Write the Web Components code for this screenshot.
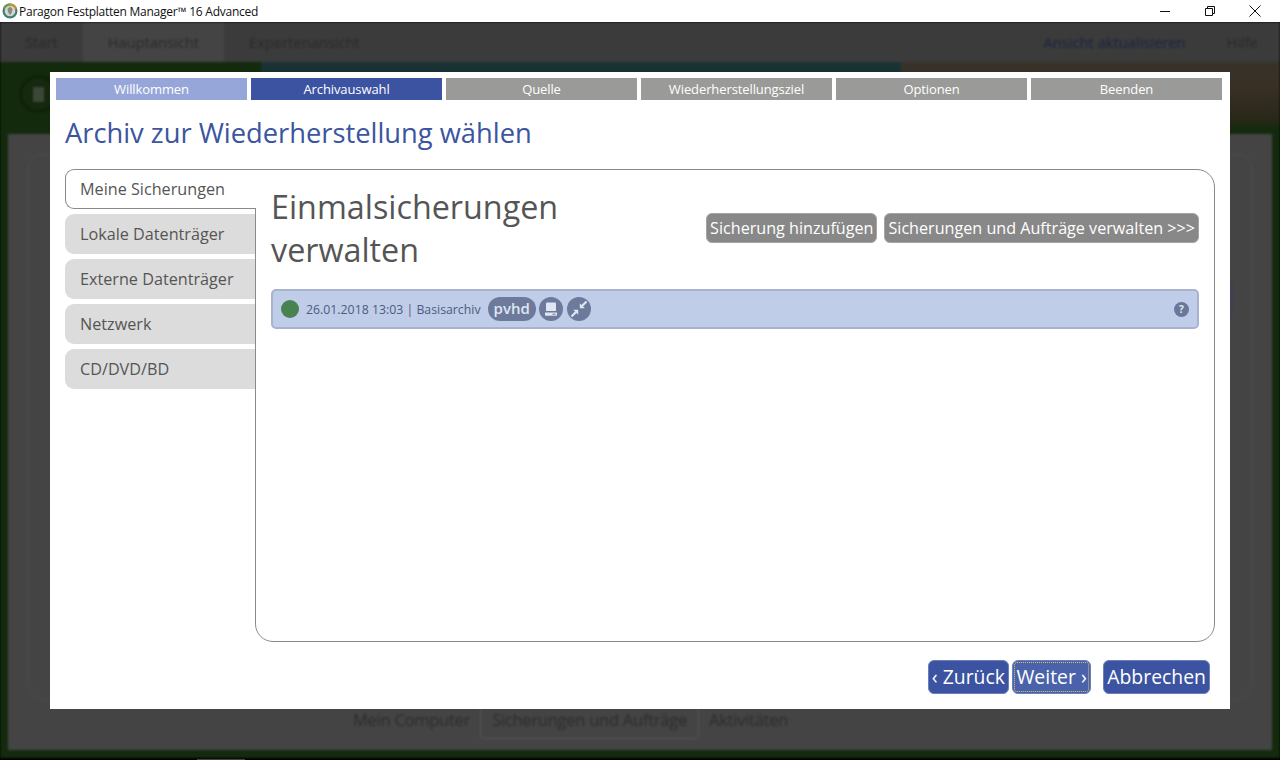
<!DOCTYPE html>
<html lang="de">
<head>
<meta charset="utf-8">
<title>Paragon Festplatten Manager</title>
<style>
  html, body { margin: 0; height: 100%; overflow: hidden; background: #fff; }
  body { font-family: "Open Sans", "Liberation Sans", sans-serif; }
</style>
</head>
<body>
<app-window>
  <title-bar>Paragon Festplatten Manager™ 16 Advanced</title-bar>
  <dimmed-app></dimmed-app>
  <wizard-dialog slot="dialog">
    <wizard-step state="done">Willkommen</wizard-step>
    <wizard-step state="active">Archivauswahl</wizard-step>
    <wizard-step>Quelle</wizard-step>
    <wizard-step>Wiederherstellungsziel</wizard-step>
    <wizard-step>Optionen</wizard-step>
    <wizard-step>Beenden</wizard-step>

    <source-tab slot="tabs" selected>Meine Sicherungen</source-tab>
    <source-tab slot="tabs">Lokale Datenträger</source-tab>
    <source-tab slot="tabs">Externe Datenträger</source-tab>
    <source-tab slot="tabs">Netzwerk</source-tab>
    <source-tab slot="tabs">CD/DVD/BD</source-tab>

    <span slot="heading">Einmalsicherungen<br>verwalten</span>
    <gray-button slot="actions">Sicherung hinzufügen</gray-button>
    <gray-button slot="actions">Sicherungen und Aufträge verwalten &gt;&gt;&gt;</gray-button>

    <archive-row slot="list"></archive-row>

    <blue-button slot="nav" style="margin-right:3px">‹ Zurück</blue-button>
    <blue-button slot="nav" focused style="margin-right:12px">Weiter ›</blue-button>
    <blue-button slot="nav">Abbrechen</blue-button>
  </wizard-dialog>
</app-window>

<script>
// small helper so each element only has to hand over its markup
class ShadowElement extends HTMLElement {
  constructor() {
    super();
    this.attachShadow({ mode: 'open' });
  }

  connectedCallback() {
    this.shadowRoot.innerHTML = this.markup();
  }
}

class AppWindow extends ShadowElement {
  markup() {
    return `
    <style>
      :host { display: flex; flex-direction: column; width: 1280px; height: 760px; position: relative; overflow: hidden; }
      .dialog { position: absolute; left: 50px; top: 72px; }
    </style>
    <slot></slot>
    <div class="dialog"><slot name="dialog"></slot></div>`;
  }
}

class TitleBar extends ShadowElement {
  markup() {
    return `
    <style>
      :host { display: flex; align-items: center; height: 22px; flex: none; background: #fff; color: #111; font: 12px "Open Sans", sans-serif; }
      .logo { width: 16px; height: 16px; margin: 0 1px 0 2px; flex: none; }
      .text { flex: 1; letter-spacing: -0.245px; }
      .ctl { width: 45px; height: 22px; flex: none; display: flex; align-items: center; justify-content: center; }
    </style>
    <svg class="logo" viewBox="0 0 16 16">
      <circle cx="8" cy="8" r="7.5" fill="#3d7f78"/>
      <path d="M8 .5A7.5 7.5 0 0 1 15 5.500L8 8z" fill="#c9913f"/>
      <path d="M1 5A7.500 7.500 0 0 1 8 .5L8 8z" fill="#6f9a52"/>
      <circle cx="8" cy="8" r="5.300" fill="#d5d6cf"/>
      <path d="M8 3.500l2.600 2.400-.8 3.300L8 12.500 6.200 9.200l-.8-3.300z" fill="#8a8d84"/>
    </svg>
    <span class="text"><slot></slot></span>
    <span class="ctl"><svg width="12" height="12" viewBox="0 0 12 12"><path d="M1 6.500h10" stroke="#111" fill="none"/></svg></span>
    <span class="ctl"><svg width="12" height="12" viewBox="0 0 12 12"><path d="M1.500 3.500h7v7h-7zM3.500 3.500v-2h7v7h-2" stroke="#111" fill="none"/></svg></span>
    <span class="ctl" style="margin-right:3px"><svg width="12" height="12" viewBox="0 0 12 12"><path d="M.5.5l11 11M11.500.5l-11 11" stroke="#111" fill="none"/></svg></span>`;
  }
}

// the main window behind the modal: dark and blurred
class DimmedApp extends ShadowElement {
  markup() {
    return `
    <style>
      :host { display: flex; flex-direction: column; flex: 1; min-height: 0; background: #000; overflow: hidden; }
      .wrap { flex: 1; display: flex; flex-direction: column; filter: blur(1px); min-height: 0; font: 14.7px "Open Sans", sans-serif; color: #2a2a2a; }
      .menu { height: 40px; flex: none; background: #3b3b3b; display: flex; align-items: center; }
      .menu span { padding: 0 25px; }
      .menu .on { align-self: stretch; display: flex; align-items: center; background: #444; }
      .menu .grow { flex: 1; }
      .menu .blue { color: #1b2140; padding: 0 20px 0 0; }
      .menu .help { padding: 0 22px 0 21px; }
      .band { height: 66px; flex: none; display: flex; }
      .band > div { display: flex; align-items: center; }
      .green { width: 261px; background: #142a0c; }
      .teal { width: 640px; background: linear-gradient(#1a3434, #1b2c32 30%, #1c2a2a 70%, #182a18); }
      .brown { flex: 1; background: linear-gradient(#38322a, #383024 40%, #2a281a 85%, #182a0e); }
      .circle { width: 38px; height: 38px; box-sizing: border-box; border-radius: 50%; margin: -2px 0 0 19px; border: 3px solid #0e2208; background: #15290e; display: flex; align-items: center; justify-content: center; }
      .doc { width: 11px; height: 15px; background: #3c4639; border-radius: 1px; }
      .main { flex: 1; background: #142a0c; padding: 6px 8px 8px; display: flex; min-height: 0; }
      .sheet { flex: 1; background: #444; display: flex; flex-direction: column; padding: 20px 20px 0; }
      .card { height: 546px; box-sizing: border-box; flex: none; border: 1px solid #4d4d4d; border-radius: 14px; padding: 126px 18px 0; display: flex; justify-content: flex-end; align-items: flex-start; }
      .ghost { width: 40px; height: 36px; background: #3d4050; border-radius: 4px; }
      .bottom { display: flex; align-items: flex-start; gap: 10px; font-size: 16.5px; letter-spacing: -0.25px; color: #2c2c2c; padding-left: 325px; }
      .bottom span { margin-top: 8px; }
      .bottom b { font-weight: 400; border: 1px solid #555; border-top: 0; border-radius: 0 0 4px 4px; padding: 8px 11px 7px; }
      .foot { height: 2px; flex: none; background: #000; display: flex; align-items: flex-end; }
      .foot i { display: block; width: 48px; height: 1px; margin-left: 197px; background: #444; }
    </style>
    <div class="wrap">
      <div class="menu">
        <span>Start</span><span class="on">Hauptansicht</span><span>Expertenansicht</span>
        <span class="grow"></span>
        <span class="blue">Ansicht aktualisieren</span><span class="help">Hilfe</span>
      </div>
      <div class="band">
        <div class="green"><div class="circle"><div class="doc"></div></div></div>
        <div class="teal"></div>
        <div class="brown"></div>
      </div>
      <div class="main">
        <div class="sheet">
          <div class="card"><div class="ghost"></div></div>
          <div class="bottom"><span>Mein Computer</span><b>Sicherungen und Aufträge</b><span>Aktivitäten</span></div>
        </div>
      </div>
    </div>
    <div class="foot"><i></i></div>`;
  }
}

class WizardDialog extends ShadowElement {
  markup() {
    return `
    <style>
      :host { display: flex; flex-direction: column; box-sizing: border-box; width: 1180px; height: 637px; background: #fff; padding: 6px 8px 0 6px; color: #555; }
      .steps { display: grid; grid-template-columns: repeat(6, 1fr); gap: 4px; height: 22px; }
      h1 { margin: 16px 0 0 9px; font: 400 27.300px/34px "Open Sans", sans-serif; color: #3b55a0; height: 53px; }
      .body { display: flex; margin-left: 9px; margin-right: 7px; height: 473px; }
      .tabs { width: 190px; flex: none; display: flex; flex-direction: column; gap: 5px; position: relative; z-index: 1; }
      .panel { flex: 1; box-sizing: border-box; border: 1px solid #8a8a8a; border-radius: 0 18px 18px 18px; padding: 0 15px; }
      .head { display: flex; justify-content: space-between; align-items: center; height: 119px; }
      .title { font-size: 32.300px; line-height: 43px; color: #555; padding-bottom: 3px; }
      .actions { display: flex; gap: 7px; margin-bottom: 3px; }
      .nav { display: flex; justify-content: flex-end; margin: 18px 12px 0 0; }
    </style>
    <div class="steps"><slot></slot></div>
    <h1>Archiv zur Wiederherstellung wählen</h1>
    <div class="body">
      <div class="tabs"><slot name="tabs"></slot></div>
      <div class="panel">
        <div class="head">
          <div class="title"><slot name="heading"></slot></div>
          <div class="actions"><slot name="actions"></slot></div>
        </div>
        <slot name="list"></slot>
      </div>
    </div>
    <div class="nav"><slot name="nav"></slot></div>`;
  }
}

class WizardStep extends ShadowElement {
  markup() {
    const colors = { done: '#97a6d8', active: '#3b53a0' };
    const bg = colors[this.getAttribute('state')] || '#9a9a98';
    return `
    <style>
      :host { display: flex; align-items: center; justify-content: center; background: ${bg}; color: #fff; font: 13px "Open Sans", sans-serif; letter-spacing: -0.1px; }
    </style>
    <slot></slot>`;
  }
}

class SourceTab extends ShadowElement {
  markup() {
    return `
    <style>
      :host { display: flex; align-items: center; box-sizing: border-box; height: 40px; padding-left: 15px; font: 16.200px "Open Sans", sans-serif; color: #555;
        border-radius: 9px 0 0 9px; background: #dcdcdc; }
      :host([selected]) { background: #fff; border: 1px solid #8a8a8a; border-right: 0; padding-left: 14px; width: 191px; }
    </style>
    <slot></slot>`;
  }
}

class GrayButton extends ShadowElement {
  markup() {
    return `
    <style>
      :host { display: flex; align-items: center; box-sizing: border-box; height: 30px; padding: 0 3px; background: #888; border: 1px solid #a5a5a5; border-radius: 6px; color: #fff; font: 16.150px "Open Sans", sans-serif; white-space: nowrap; }
    </style>
    <slot></slot>`;
  }
}

class BlueButton extends ShadowElement {
  markup() {
    const focused = this.hasAttribute('focused');
    return `
    <style>
      :host { display: flex; align-items: center; box-sizing: border-box; height: 34px; padding: 0 ${focused ? 3.5 : 3}px 2px; background: ${focused ? '#4a62aa' : '#3b53a0'}; border: 1px solid #6b7fbb; border-radius: 6px; color: #fff; font: 19.400px "Open Sans", sans-serif; white-space: nowrap; position: relative; }
      .focus { display: ${focused ? 'block' : 'none'}; position: absolute; inset: 1px; border: 1px dotted #d8c27a; border-radius: 3px; }
    </style>
    <slot></slot><span class="focus"></span>`;
  }
}

class ArchiveRow extends ShadowElement {
  markup() {
    return `
    <style>
      :host { display: flex; align-items: center; box-sizing: border-box; height: 40px; background: #bfcde9; border: 2px solid #a9b3cf; border-radius: 5px; padding: 0 8px 0 8px; font: 12.300px "Open Sans", sans-serif; color: #4f5a7e; }
      .dot { width: 18px; height: 18px; border-radius: 50%; background: #47824f; margin-right: 7px; }
      .pill { height: 24px; border-radius: 12px; background: #6d7a9b; color: #dfe6f4; font: 600 15px "Open Sans", sans-serif; padding: 0 6px 3px; box-sizing: border-box; display: flex; align-items: center; margin: 0 3px 0 7px; }
      .ico { width: 24px; height: 24px; margin-right: 4px; flex: none; }
      .grow { flex: 1; }
      .help { width: 15px; height: 15px; border-radius: 50%; background: #6a7798; color: #e6ebf6; font: 700 10px/15px "Open Sans", sans-serif; text-align: center; }
    </style>
    <span class="dot"></span>
    <span>26.01.2018 13:03 | Basisarchiv</span>
    <span class="pill">pvhd</span>
    <svg class="ico" viewBox="0 0 24 24">
      <circle cx="12" cy="12" r="12" fill="#6d7a9b"/>
      <path d="M7 6.500a1 1 0 0 1 1-1h8a1 1 0 0 1 1 1V14H7z" fill="#dfe6f4"/>
      <path d="M6 15.500h12v2.500a.8.8 0 0 1-.8.8H6.800a.8.8 0 0 1-.8-.8z" fill="#dfe6f4"/>
      <path d="M13.500 17.200h3" stroke="#6d7a9b" stroke-width="1"/>
    </svg>
    <svg class="ico" viewBox="0 0 24 24">
      <circle cx="12" cy="12" r="12" fill="#6d7a9b"/>
      <path d="M19.500 4.500l-5 5" stroke="#dfe6f4" stroke-width="2.200" fill="none"/>
      <path d="M12.800 6.200v5h5z" fill="#dfe6f4"/>
      <path d="M4.500 19.500l5-5" stroke="#dfe6f4" stroke-width="2.200" fill="none"/>
      <path d="M11.200 17.800v-5h-5z" fill="#dfe6f4"/>
    </svg>
    <span class="grow"></span>
    <span class="help">?</span>`;
  }
}

customElements.define('app-window', AppWindow);
customElements.define('title-bar', TitleBar);
customElements.define('dimmed-app', DimmedApp);
customElements.define('wizard-dialog', WizardDialog);
customElements.define('wizard-step', WizardStep);
customElements.define('source-tab', SourceTab);
customElements.define('gray-button', GrayButton);
customElements.define('blue-button', BlueButton);
customElements.define('archive-row', ArchiveRow);
</script>
</body>
</html>
